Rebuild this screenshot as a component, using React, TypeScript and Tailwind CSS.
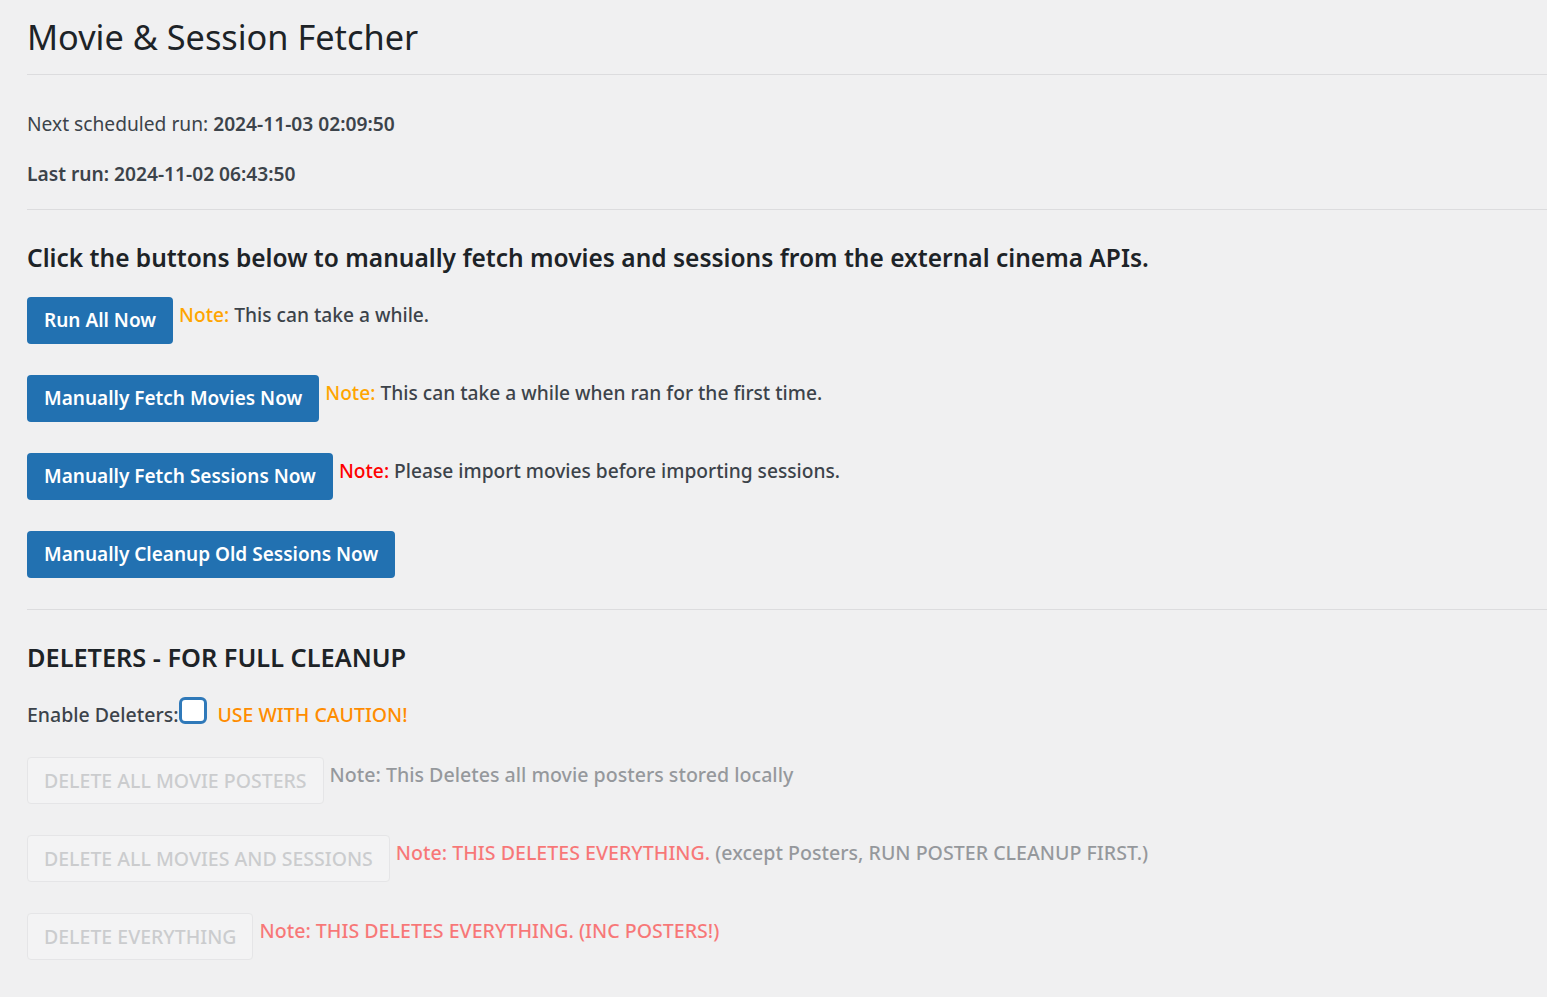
const FONT = "font-['Noto_Sans','Open_Sans',sans-serif]";

function ActionRow({ label, children }: { label: string; children?: React.ReactNode }) {
  return (
    <div className="flex items-start">
      <button className="h-[47px] shrink-0 rounded-[4px] bg-[#2271b1] px-[17px] text-[19px] font-semibold text-white">
        {label}
      </button>
      <span className="ml-[6px] text-[19.2px] leading-[36px] font-medium text-[#3c434a]">{children}</span>
    </div>
  );
}

function DeleterRow({ label, children }: { label: string; children?: React.ReactNode }) {
  return (
    <div className="flex items-start">
      <button
        disabled
        className="h-[47px] shrink-0 rounded-[4px] border border-[#dcdcde] bg-[#f6f7f7] px-[16px] text-[19.5px] font-medium uppercase text-[#a7aaad]"
      >
        {label}
      </button>
      <span className="ml-[6px] text-[19.6px] leading-[36px] font-medium text-[#3c434a]">{children}</span>
    </div>
  );
}

export default function App() {
  return (
    <div className={`min-h-[997px] bg-[#f0f0f1] pl-[27px] ${FONT}`}>
      <h1 className="pt-[14px] text-[34.3px] leading-[46px] font-normal text-[#1d2327]">Movie &amp; Session Fetcher</h1>
      <hr className="mt-[14px] border-t border-[#dcdcde]" />

      <p className="mt-[34px] text-[19.2px] leading-[30px] text-[#3c434a]">
        Next scheduled run: <span className="font-semibold">2024-11-03 02:09:50</span>
      </p>
      <p className="mt-[20px] text-[19.2px] leading-[30px] font-semibold text-[#3c434a]">Last run: 2024-11-02 06:43:50</p>
      <hr className="mt-[20px] border-t border-[#dcdcde]" />

      <h2 className="mt-[31px] text-[24.5px] leading-[34px] font-semibold text-[#1d2327]">
        Click the buttons below to manually fetch movies and sessions from the external cinema APIs.
      </h2>

      <div className="mt-[22px] flex flex-col gap-[31px]">
        <ActionRow label="Run All Now">
          <span className="text-[#ffa500]">Note:</span> This can take a while.
        </ActionRow>
        <ActionRow label="Manually Fetch Movies Now">
          <span className="text-[#ffa500]">Note:</span> This can take a while when ran for the first time.
        </ActionRow>
        <ActionRow label="Manually Fetch Sessions Now">
          <span className="text-[#ff0000]">Note:</span> Please import movies before importing sessions.
        </ActionRow>
        <ActionRow label="Manually Cleanup Old Sessions Now" />
      </div>

      <hr className="mt-[31px] border-t border-[#dcdcde]" />

      <h2 className="mt-[30px] text-[25.3px] leading-[34px] font-semibold text-[#1d2327]">DELETERS - FOR FULL CLEANUP</h2>

      <div className="mt-[23px] flex items-end text-[19.5px] leading-[31px] font-medium text-[#3c434a]">
        <span>Enable Deleters:</span>
        <input
          type="checkbox"
          className="mb-[6px] ml-[1px] h-[27px] w-[28px] appearance-none rounded-[6px] border-[3px] border-[#2f79b9] bg-white"
        />
        <span className="ml-[10px] text-[#ff8c00]">USE WITH CAUTION!</span>
      </div>

      <div className="mt-[27px] flex flex-col gap-[31px] opacity-50">
        <DeleterRow label="Delete all movie posters">Note: This Deletes all movie posters stored locally</DeleterRow>
        <DeleterRow label="Delete all movies and sessions">
          <span className="text-[#ff0000]">Note: THIS DELETES EVERYTHING.</span> (except Posters, RUN POSTER CLEANUP FIRST.)
        </DeleterRow>
        <DeleterRow label="Delete Everything">
          <span className="text-[#ff0000]">Note: THIS DELETES EVERYTHING. (INC POSTERS!)</span>
        </DeleterRow>
      </div>
    </div>
  );
}
